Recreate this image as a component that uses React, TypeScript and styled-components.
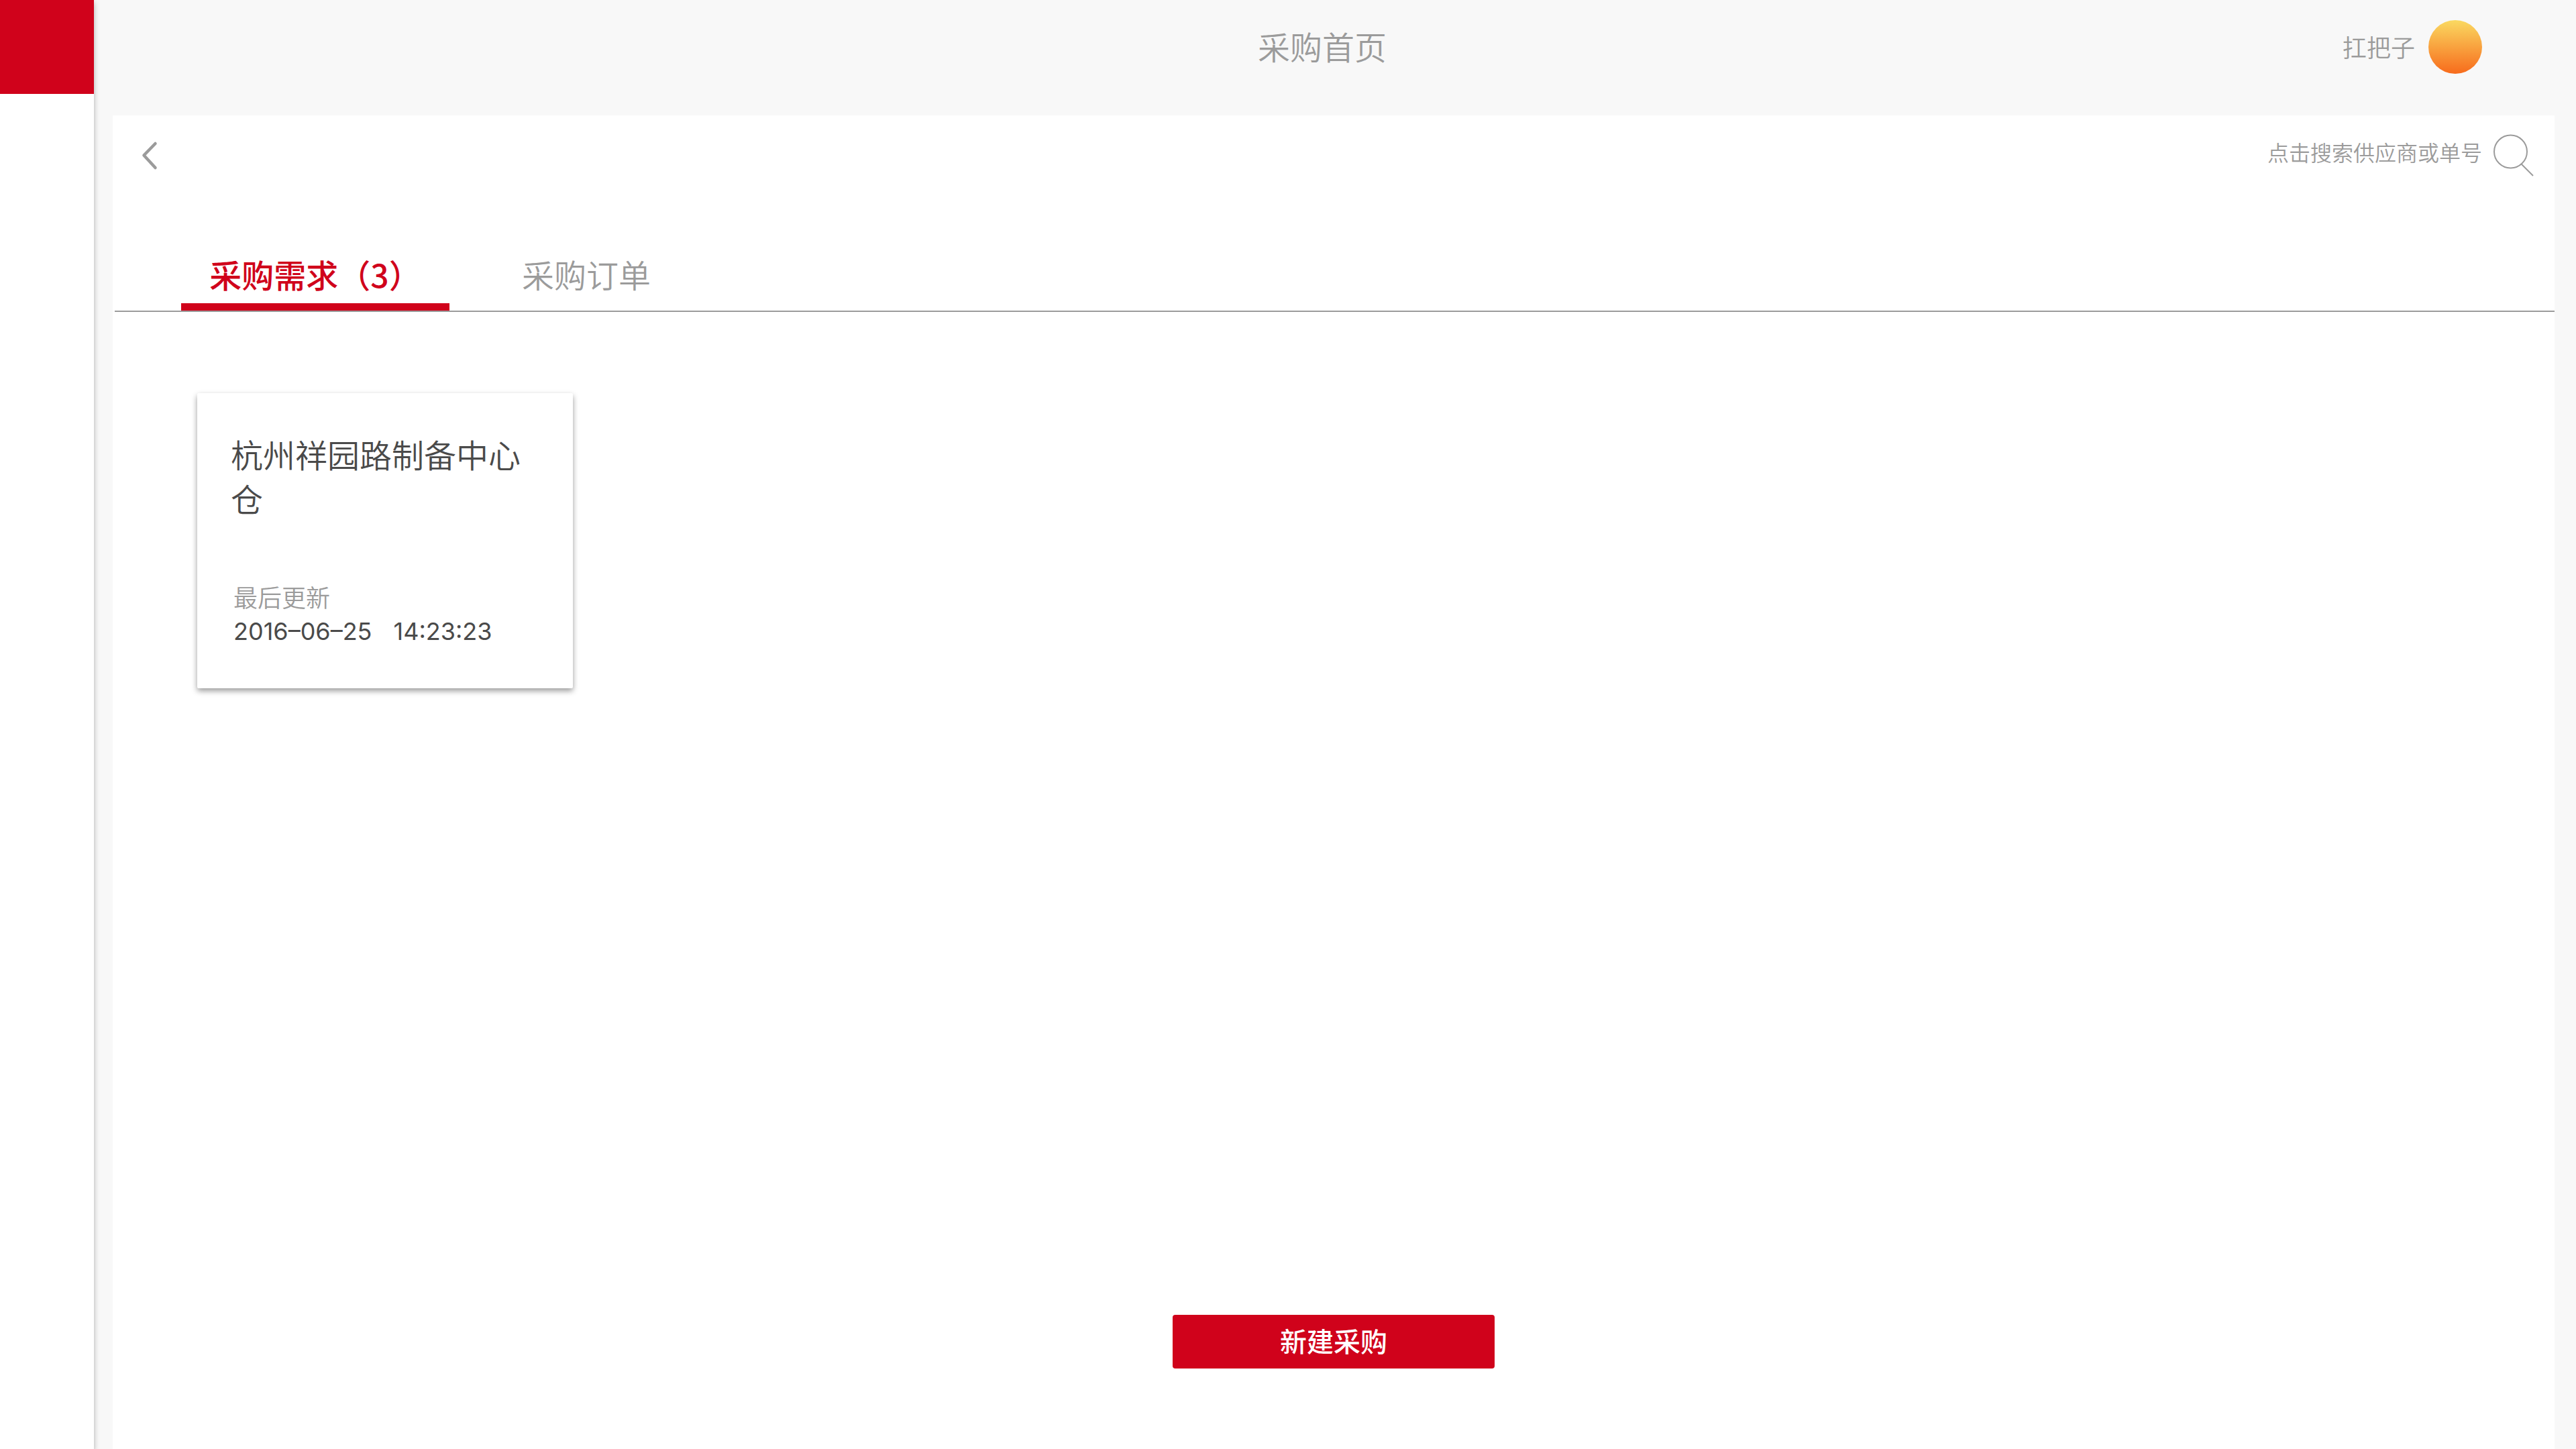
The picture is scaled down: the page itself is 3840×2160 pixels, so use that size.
import React, { useState } from "react";
import styled, { createGlobalStyle } from "styled-components";

const color = {
  brand: "#d0021b",
  muted: "#9b9b9b",
  text: "#4a4a4a",
  page: "#f8f8f8",
  surface: "#ffffff",
};

const GlobalStyle = createGlobalStyle`
  *, *::before, *::after { box-sizing: border-box; }
  body {
    margin: 0;
    background: ${color.page};
    color: ${color.text};
    font-family: "Noto Sans CJK SC", sans-serif;
    font-weight: 350;
  }
  button, input { font: inherit; color: inherit; }
  button { border: 0; padding: 0; background: none; cursor: pointer; }
  h1, h2, p, dl, dd { margin: 0; font-weight: inherit; }
`;

const Shell = styled.div`
  display: flex;
  min-height: 100vh;
`;

const Sidebar = styled.nav`
  flex: none;
  width: 140px;
  background: ${color.surface};
  box-shadow: 0 4px 8px rgba(0, 0, 0, 0.3);
`;

const Brand = styled.div`
  height: 140px;
  background: ${color.brand};
`;

const Page = styled.div`
  flex: 1;
  min-width: 0;
  display: flex;
  flex-direction: column;
`;

const Header = styled.header`
  display: grid;
  grid-template-columns: 1fr auto 1fr;
  align-items: center;
  height: 140px;
  padding: 0 140px 0 102px;
  color: ${color.muted};
`;

const PageTitle = styled.h1`
  grid-column: 2;
  padding-bottom: 4px;
  font-size: 48px;
  line-height: 68px;
`;

const User = styled.div`
  display: flex;
  align-items: center;
  justify-content: flex-end;
  gap: 20px;
  font-size: 36px;
  line-height: 50px;
`;

const UserName = styled.span`
  padding-bottom: 2px;
`;

const Avatar = styled.span`
  width: 80px;
  height: 80px;
  border-radius: 50%;
  background: linear-gradient(#fad961, #f76b1c);
`;

const Panel = styled.main`
  flex: 1;
  display: flex;
  flex-direction: column;
  margin: 32px 32px 0 28px;
  padding-bottom: 120px;
  background: ${color.surface};
`;

const Toolbar = styled.div`
  display: flex;
  align-items: center;
  justify-content: space-between;
  height: 120px;
  padding: 0 30px 0 39px;
  color: ${color.muted};
`;

const IconButton = styled.button`
  display: flex;
  svg { display: block; }
`;

const Search = styled.form`
  display: flex;
  align-items: center;
  gap: 16px;
`;

const SearchInput = styled.input`
  width: 320px;
  height: 48px;
  margin-bottom: 12px;
  padding: 0;
  border: 0;
  outline: 0;
  background: none;
  font-size: 32px;
  &::placeholder { color: ${color.muted}; opacity: 1; }
`;

const Tabs = styled.div`
  display: flex;
  gap: 4px;
  margin: 82px 0 0 3px;
  padding-left: 99px;
  border-bottom: 2px solid ${color.muted};
`;

const Tab = styled.button<{ $active: boolean }>`
  min-width: 400px;
  padding-bottom: 10px;
  border-bottom: 11px solid ${(p) => (p.$active ? color.brand : "transparent")};
  color: ${(p) => (p.$active ? color.brand : color.muted)};
  font-size: 48px;
  line-height: 68px;
  font-weight: ${(p) => (p.$active ? 500 : 350)};
`;

const Cards = styled.section`
  display: flex;
  flex-wrap: wrap;
  gap: 60px;
  padding: 121px 126px;
`;

const Card = styled.article`
  display: flex;
  flex-direction: column;
  justify-content: space-between;
  width: 560px;
  min-height: 440px;
  padding: 57px 50px 60px;
  border-radius: 2px;
  background: ${color.surface};
  box-shadow: 0 4px 8px rgba(0, 0, 0, 0.4);
`;

const CardTitle = styled.h2`
  font-size: 48px;
  line-height: 66px;
`;

const Updated = styled.dl`
  display: flex;
  flex-direction: column;
  gap: 2px;
  padding-left: 4px;
  font-size: 36px;
  line-height: 50px;
`;

const UpdatedLabel = styled.dt`
  color: ${color.muted};
`;

const UpdatedTime = styled.dd`
  display: flex;
  gap: 32px;
  font-family: Inter, "Noto Sans CJK SC", sans-serif;
  font-weight: 400;
`;

const CreateButton = styled.button`
  align-self: center;
  width: 480px;
  height: 80px;
  margin-top: auto;
  padding-bottom: 4px;
  border-radius: 4px;
  background: ${color.brand};
  color: ${color.surface};
  font-size: 40px;
  line-height: 56px;
  font-weight: 500;
`;

const tabs = ["采购需求（3）", "采购订单"];

const warehouses = [{ name: "杭州祥园路制备中心仓", date: "2016–06–25", time: "14:23:23" }];

function BackIcon() {
  return (
    <svg width="30" height="44" viewBox="0 0 30 44" fill="none" aria-hidden="true">
      <path
        d="M24.500 4 7.500 21.500 24.500 40"
        stroke="currentColor"
        strokeWidth="4.500"
        strokeLinecap="round"
        strokeLinejoin="round"
      />
    </svg>
  );
}

function SearchIcon() {
  return (
    <svg width="62" height="64" viewBox="0 0 62 64" fill="none" stroke="currentColor" strokeWidth="2" aria-hidden="true">
      <circle cx="26.500" cy="26" r="24.500" />
      <path d="M42.500 44.500 60 62" />
    </svg>
  );
}

export default function App() {
  const [active, setActive] = useState(0);

  return (
    <>
      <GlobalStyle />
      <Shell>
        <Sidebar>
          <Brand />
        </Sidebar>
        <Page>
          <Header>
            <PageTitle>采购首页</PageTitle>
            <User>
              <UserName>扛把子</UserName>
              <Avatar />
            </User>
          </Header>
          <Panel>
            <Toolbar>
              <IconButton type="button" aria-label="返回">
                <BackIcon />
              </IconButton>
              <Search role="search" onSubmit={(e) => e.preventDefault()}>
                <SearchInput type="text" aria-label="搜索" placeholder="点击搜索供应商或单号" />
                <IconButton type="submit" aria-label="搜索">
                  <SearchIcon />
                </IconButton>
              </Search>
            </Toolbar>
            <Tabs role="tablist">
              {tabs.map((label, i) => (
                <Tab
                  key={label}
                  type="button"
                  role="tab"
                  aria-selected={i === active}
                  $active={i === active}
                  onClick={() => setActive(i)}
                >
                  {label}
                </Tab>
              ))}
            </Tabs>
            <Cards>
              {warehouses.map((w) => (
                <Card key={w.name}>
                  <CardTitle>{w.name}</CardTitle>
                  <Updated>
                    <UpdatedLabel>最后更新</UpdatedLabel>
                    <UpdatedTime>
                      <span>{w.date}</span>
                      <span>{w.time}</span>
                    </UpdatedTime>
                  </Updated>
                </Card>
              ))}
            </Cards>
            <CreateButton type="button">新建采购</CreateButton>
          </Panel>
        </Page>
      </Shell>
    </>
  );
}
